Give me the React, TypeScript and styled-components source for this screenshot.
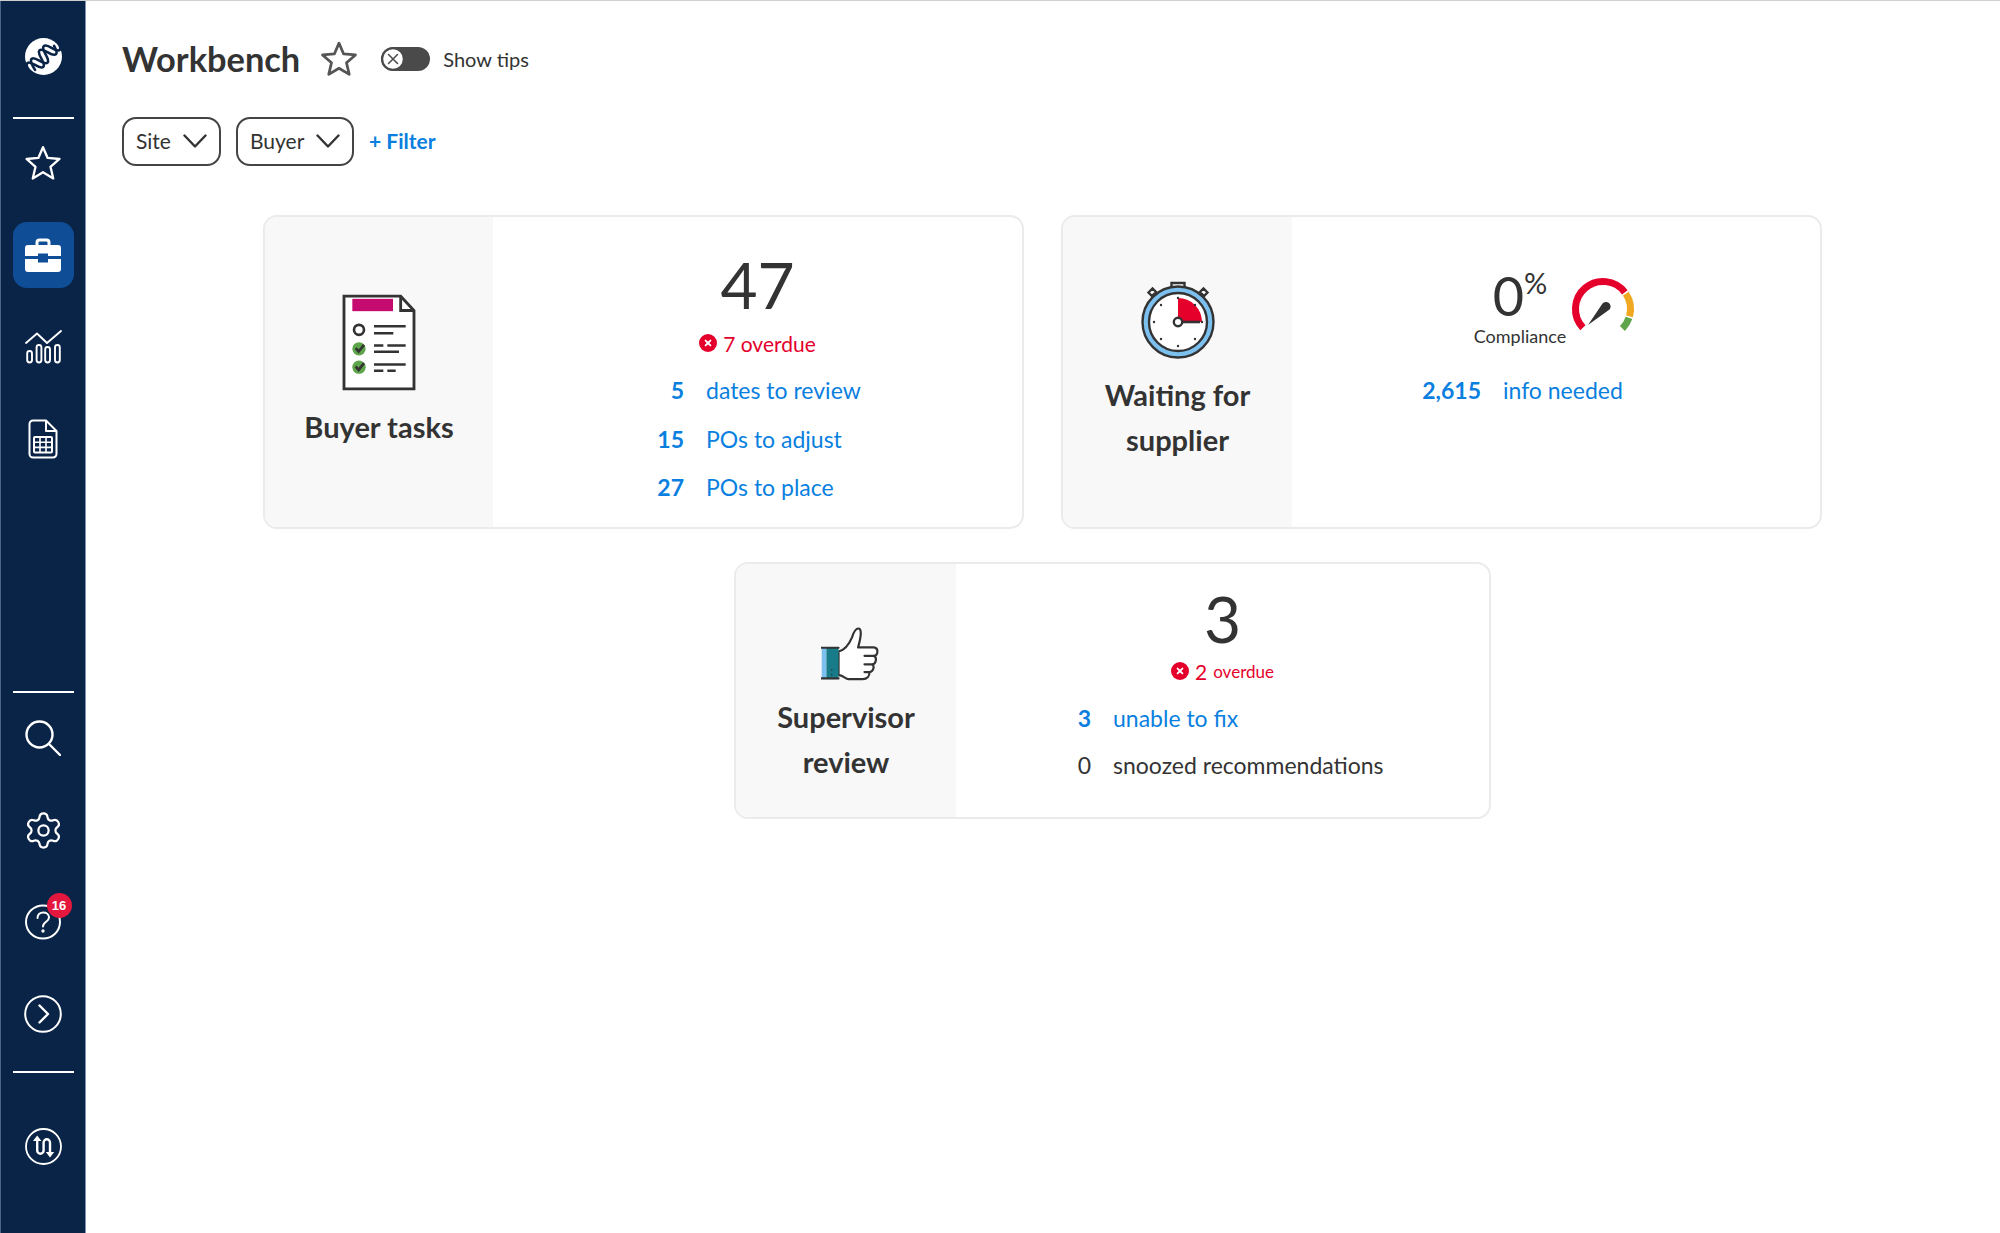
import React from 'react';
import styled, { createGlobalStyle } from 'styled-components';
import { Settings } from 'lucide-react';

const GlobalStyle = createGlobalStyle`
  html, body {
    margin: 0;
    padding: 0;
    background: #fff;
    font-family: 'Lato', 'Liberation Sans', sans-serif;
    color: #333;
  }
  * { box-sizing: border-box; }
`;

const polar = (r: number, deg: number) => {
  const a = (deg * Math.PI) / 180;
  return `${(35 + r * Math.cos(a)).toFixed(2)} ${(33 + r * Math.sin(a)).toFixed(2)}`;
};

const gaugeArc = (from: number, to: number) => `M${polar(27.5, from)} A27.5 27.5 0 ${to - from > 180 ? 1 : 0} 1 ${polar(27.5, to)}`;

const LogoIcon = () => (
  <svg width="37" height="37" viewBox="0 0 37 37">
    <circle cx="18.5" cy="18.5" r="18.5" fill="#fff" />
    <g transform="rotate(-45 18.5 18.5)" fill="none" stroke="#0a2447" strokeWidth="2.6" strokeLinecap="round">
      <path d="M-3 22 C0 9 4 9 6.5 18.5 S13 28 15.5 18.5 S22 9 24.5 18.5 S31 28 33.5 18.5" />
      <path d="M3 22 C6 9 10 9 12.5 18.5 S19 28 21.5 18.5 S28 9 30.5 18.5 S37 28 40 15" />
    </g>
  </svg>
);

const StarIcon = ({ size, color, weight }: { size: number; color: string; weight: number }) => (
  <svg width={size} height={size} viewBox="0 0 36 36" fill="none" stroke={color} strokeWidth={weight} strokeLinejoin="round">
    <path d="M18 3 L22.4 13.2 L33.6 14.2 L25.1 21.6 L27.7 32.6 L18 26.8 L8.3 32.6 L10.9 21.6 L2.4 14.2 L13.6 13.2 Z" />
  </svg>
);

const BriefcaseIcon = () => (
  <svg width="36" height="34" viewBox="0 0 36 34">
    <path d="M12 8 V4.5 A2.5 2.5 0 0 1 14.5 2 H21.5 A2.5 2.5 0 0 1 24 4.5 V8" fill="none" stroke="#fff" strokeWidth="3" />
    <path d="M3 7 H33 A3 3 0 0 1 36 10 V18 H23 V15.5 H13 V18 H0 V10 A3 3 0 0 1 3 7 Z" fill="#fff" />
    <path d="M0 21 H13 V24.5 H23 V21 H36 V31 A3 3 0 0 1 33 34 H3 A3 3 0 0 1 0 31 Z" fill="#fff" />
  </svg>
);

const TrendIcon = () => (
  <svg width="37" height="34" viewBox="0 0 37 34" fill="none" stroke="#fff" strokeWidth="1.9" strokeLinejoin="round" strokeLinecap="round">
    <path d="M1 13 L12 3.5 L22 13 L36 1" />
    <rect x="2.2" y="21" width="4.8" height="11.5" rx="2.4" />
    <rect x="11.6" y="15" width="4.8" height="17.5" rx="2.4" />
    <rect x="20.2" y="17" width="4.8" height="15.5" rx="2.4" />
    <rect x="30" y="15" width="4.8" height="17.5" rx="2.4" />
  </svg>
);

const SheetIcon = () => (
  <svg width="30" height="40" viewBox="0 0 30 40" fill="none" stroke="#fff" strokeWidth="2" strokeLinejoin="round">
    <path d="M5 1.5 H18 L28.5 12 V35 A3.5 3.5 0 0 1 25 38.5 H5 A3.5 3.5 0 0 1 1.5 35 V5 A3.5 3.5 0 0 1 5 1.5 Z" />
    <path d="M18 1.5 V12 H28.5" />
    <rect x="6" y="18" width="18" height="15.5" rx="1" />
    <path d="M6 23.2 H24 M6 28.4 H24 M12 18 V33.5 M18 18 V33.5" strokeWidth="1.6" />
  </svg>
);

const SearchIcon = () => (
  <svg width="36" height="36" viewBox="0 0 36 36" fill="none" stroke="#fff" strokeWidth="2.4" strokeLinecap="round">
    <circle cx="14.5" cy="14.5" r="13" />
    <path d="M24 24 L35 35" />
  </svg>
);

const HelpIcon = () => (
  <svg width="36" height="36" viewBox="0 0 36 36" fill="none" stroke="#fff" strokeWidth="2" strokeLinecap="round">
    <ellipse cx="18" cy="18" rx="17" ry="16.5" />
    <path d="M12.5 14 C12.5 6.5 24 7 24 13.5 C24 18 18 17.5 18 22.5" />
    <circle cx="18" cy="27" r="0.7" fill="#fff" />
  </svg>
);

const ForwardIcon = () => (
  <svg width="38" height="38" viewBox="0 0 38 38" fill="none" stroke="#fff" strokeWidth="2" strokeLinecap="round" strokeLinejoin="round">
    <circle cx="19" cy="19" r="17.8" />
    <path d="M15.5 10.5 L24 19 L15.5 27.5" strokeWidth="2.4" />
  </svg>
);

const SwapIcon = () => (
  <svg width="37" height="37" viewBox="0 0 37 37" fill="none" stroke="#fff" strokeWidth="2.4">
    <circle cx="18.5" cy="18.5" r="17.5" strokeWidth="1.8" />
    <path d="M12.2 11 V22.5 A3.2 3.2 0 0 0 18.6 22.5 V14.5 A3.2 3.2 0 0 1 25 14.5 V26" />
    <path d="M12.2 7.5 L16.4 13 H8 Z M25 29.5 L29.2 24 H20.8 Z" fill="#fff" stroke="none" />
  </svg>
);

const ChevronIcon = () => (
  <svg width="24" height="14" viewBox="0 0 24 14" fill="none" stroke="#333" strokeWidth="2.4" strokeLinecap="round" strokeLinejoin="round">
    <path d="M1.5 1.5 L12 12.5 L22.5 1.5" />
  </svg>
);

const OverdueIcon = () => (
  <svg width="18" height="18" viewBox="0 0 18 18">
    <circle cx="9" cy="9" r="9" fill="#e4002b" />
    <path d="M6.6 6.6 L11.4 11.4 M11.4 6.6 L6.6 11.4" stroke="#fff" strokeWidth="1.9" strokeLinecap="round" />
  </svg>
);

const ChecklistIcon = () => (
  <svg width="74" height="97" viewBox="34 26 222 290" fill="none" stroke="#333" strokeWidth="7.5">
    <path d="M40 32 H210 L250 75 V310 H40 Z" fill="#fff" strokeWidth="8.5" />
    <path d="M210 32 V75 H250" strokeWidth="8.5" />
    <rect x="65" y="40" width="122" height="37" fill="#c60b70" stroke="none" />
    <circle cx="85" cy="133" r="15" strokeWidth="8" />
    <path d="M130 122 H225 M130 143 H188 M130 180 H158 M170 180 H225 M130 199 H205 M130 237 H225 M130 256 H158 M170 256 H195" />
    <circle cx="85" cy="190" r="20" fill="#5ea44a" stroke="none" />
    <circle cx="85" cy="245" r="20" fill="#5ea44a" stroke="none" />
    <path d="M75 188 L84 198 L100 178 M75 243 L84 253 L100 233" strokeWidth="8" />
  </svg>
);

const StopwatchIcon = () => (
  <svg width="74" height="78" viewBox="0 0 74 78" fill="none" stroke="#333" strokeWidth="2.4">
    <path d="M30.5 2 H43.5 V7 H40 V12 H34 V7 H30.5 Z" fill="#fff" />
    <path d="M7.5 11.5 L11.5 7.5 L15 11 L11 15 Z M66.5 11.5 L62.5 7.5 L59 11 L63 15 Z" fill="#fff" />
    <path d="M12.5 15 L16 18.5 M61.5 15 L58 18.5" />
    <circle cx="37" cy="41" r="35.5" fill="#7cc0ef" />
    <circle cx="37" cy="41" r="29" fill="#fff" />
    <path d="M37 41 V17 A24 24 0 0 1 61 41 Z" fill="#e4002b" stroke="none" />
    <path d="M37 41 H59" strokeWidth="2.6" />
    <circle cx="37" cy="41" r="4.2" fill="#fff" />
    <g fill="#333" stroke="none">
      <circle cx="37" cy="17" r="1.2" />
      <circle cx="54" cy="24" r="1.2" />
      <circle cx="61" cy="41" r="1.2" />
      <circle cx="54" cy="58" r="1.2" />
      <circle cx="37" cy="65" r="1.2" />
      <circle cx="20" cy="58" r="1.2" />
      <circle cx="13" cy="41" r="1.2" />
      <circle cx="20" cy="24" r="1.2" />
    </g>
  </svg>
);

const GaugeIcon = () => (
  <GaugeSvg width="70" height="60" viewBox="0 0 70 60" fill="none" strokeWidth="7">
    <path d={gaugeArc(137, 322.5)} stroke="#e4002b" />
    <path d={gaugeArc(326, 375.5)} stroke="#f0a823" />
    <path d={gaugeArc(379, 405)} stroke="#5ea44a" />
    <path d="M20 49 L34.5 27.5 A4.6 4.6 0 0 1 41.5 33.5 Z" fill="#333" />
  </GaugeSvg>
);

const ThumbIcon = () => (
  <ThumbSvg width="58" height="54" viewBox="36 36 172 159" fill="none" stroke="#333" strokeWidth="6.5" strokeLinejoin="round" strokeLinecap="round">
    <path d="M88 108 C105 104 118 90 128 66 C133 50 140 39 148 40 C158 42 154 68 146 96 H192 C208 98 206 120 192 121 H165 H192 C203 124 200 146 187 146 H165 H187 C196 150 192 168 180 169 H165 H180 C180 182 172 190 160 190 H118 C108 190 102 178 88 178 Z" fill="#fff" />
    <rect x="38" y="95" width="14" height="95" fill="#7cc0ef" stroke="none" />
    <rect x="52" y="95" width="36" height="95" fill="#177b8a" stroke="none" />
    <path d="M38 97 H88 M38 188 H88" />
    <path d="M68 162 V163 M68 176 V177" strokeWidth="4" />
  </ThumbSvg>
);

const ToggleKnobIcon = () => (
  <svg width="24" height="24" viewBox="0 0 24 24" fill="none" stroke="#4a4a4a">
    <circle cx="12" cy="12" r="10.8" fill="#fff" strokeWidth="2" />
    <path d="M7.5 7.5 L16.5 16.5 M16.5 7.5 L7.5 16.5" strokeWidth="1.5" strokeLinecap="round" />
  </svg>
);

const App: React.FC = () => (
  <Page>
    <GlobalStyle />
    <Sidebar>
      <LogoSlot><LogoIcon /></LogoSlot>
      <SideDivider $before={42} $after={11} />
      <NavGroup>
        <NavItem><StarIcon size={38} color="#fff" weight={2.2} /></NavItem>
        <NavItem $active><BriefcaseIcon /></NavItem>
        <NavItem><TrendIcon /></NavItem>
        <NavItem><SheetIcon /></NavItem>
      </NavGroup>
      <SideSpacer />
      <SideDivider $before={0} $after={12} />
      <NavGroup>
        <NavItem><SearchIcon /></NavItem>
        <NavItem><Settings size={41} strokeWidth={1.3} color="#fff" /></NavItem>
        <NavItem>
          <HelpIcon />
          <Badge>16</Badge>
        </NavItem>
        <NavItem><ForwardIcon /></NavItem>
      </NavGroup>
      <SideDivider $before={24} $after={55} />
      <LogoSlot><SwapIcon /></LogoSlot>
    </Sidebar>

    <Main>
      <Header>
        <Title>Workbench</Title>
        <StarIcon size={38} color="#555" weight={2.6} />
        <Toggle><ToggleKnobIcon /></Toggle>
        <ToggleLabel>Show tips</ToggleLabel>
      </Header>

      <FilterBar>
        <FilterButton $width={99}>Site <ChevronIcon /></FilterButton>
        <FilterButton $width={118}>Buyer <ChevronIcon /></FilterButton>
        <AddFilter>+ Filter</AddFilter>
      </FilterBar>

      <CardArea>
        <CardRow>
          <Card $width={761} $height={314}>
            <IconPanel $width={228} $top={79}>
              <ChecklistIcon />
              <PanelTitle>Buyer tasks</PanelTitle>
            </IconPanel>
            <CardBody>
              <BigNumber $top={34}>47</BigNumber>
              <Overdue $top={8}><OverdueIcon /><span>7 overdue</span></Overdue>
              <RowList $top={9}>
                <Row $countWidth={191}><Count>5</Count><RowLabel>dates to review</RowLabel></Row>
                <Row $countWidth={191}><Count>15</Count><RowLabel>POs to adjust</RowLabel></Row>
                <Row $countWidth={191}><Count>27</Count><RowLabel>POs to place</RowLabel></Row>
              </RowList>
            </CardBody>
          </Card>

          <Card $width={761} $height={314}>
            <IconPanel $width={229} $top={66}>
              <StopwatchIcon />
              <PanelTitle>Waiting for<br />supplier</PanelTitle>
            </IconPanel>
            <CardBody>
              <Compliance>
                <ComplianceText>
                  <Percent><span>0</span><PercentSign>%</PercentSign></Percent>
                  <ComplianceLabel>Compliance</ComplianceLabel>
                </ComplianceText>
                <GaugeIcon />
              </Compliance>
              <RowList $top={18}>
                <Row $countWidth={189}><Count>2,615</Count><RowLabel>info needed</RowLabel></Row>
              </RowList>
            </CardBody>
          </Card>
        </CardRow>

        <CardRow $indent={471}>
          <Card $width={757} $height={257}>
            <IconPanel $width={220} $top={65}>
              <ThumbIcon />
              <PanelTitle>Supervisor<br />review</PanelTitle>
            </IconPanel>
            <CardBody>
              <BigNumber $top={21}>3</BigNumber>
              <Overdue $top={2}>
                <OverdueIcon />
                <span>2</span>
                <OverdueSmall>overdue</OverdueSmall>
              </Overdue>
              <RowList $top={9}>
                <Row $countWidth={135} $pitch={47}><Count>3</Count><RowLabel>unable to fix</RowLabel></Row>
                <Row $countWidth={135} $pitch={47} $muted><Count $light>0</Count><RowLabel>snoozed recommendations</RowLabel></Row>
              </RowList>
            </CardBody>
          </Card>
        </CardRow>
      </CardArea>
    </Main>
  </Page>
);

const Page = styled.div`
  display: flex;
  min-height: 100vh;
  border-top: 1px solid #cfcfcf;
`;

const Sidebar = styled.nav`
  width: 86px;
  flex-shrink: 0;
  display: flex;
  flex-direction: column;
  align-items: center;
  padding: 37px 0 68px;
  background: #0a2447;
  border-left: 1px solid #4a6288;
  border-right: 1px solid #7d90ad;
`;

const LogoSlot = styled.div`
  width: 37px;
  height: 37px;
  display: flex;
  align-items: center;
  justify-content: center;
`;

const SideDivider = styled.div<{ $before: number; $after: number }>`
  width: 61px;
  height: 2px;
  flex-shrink: 0;
  background: #fff;
  margin: ${({ $before }) => $before}px 0 ${({ $after }) => $after}px;
`;

const SideSpacer = styled.div`
  flex: 1;
`;

const NavGroup = styled.div`
  display: flex;
  flex-direction: column;
  gap: 26px;
`;

const NavItem = styled.div<{ $active?: boolean }>`
  position: relative;
  width: 61px;
  height: 66px;
  display: flex;
  align-items: center;
  justify-content: center;
  border-radius: 14px;
  background: ${({ $active }) => ($active ? '#0f4d96' : 'transparent')};
`;

const Badge = styled.span`
  position: absolute;
  top: 4px;
  right: 2px;
  width: 25px;
  height: 25px;
  border-radius: 50%;
  display: flex;
  align-items: center;
  justify-content: center;
  background: #e4173e;
  color: #fff;
  font-family: 'Liberation Sans', sans-serif;
  font-size: 13px;
  font-weight: 700;
`;

const Main = styled.main`
  flex: 1;
  min-width: 0;
  padding: 35px 0 0 36px;
`;

const Header = styled.header`
  display: flex;
  align-items: center;
  height: 46px;
`;

const Title = styled.h1`
  margin: 0 20px 0 0;
  font-size: 34.4px;
  font-weight: 700;
  line-height: 46px;
  color: #333;
`;

const Toggle = styled.div`
  width: 49px;
  height: 24px;
  margin: 0 13px 0 23px;
  border-radius: 12px;
  background: #4a4a4a;
`;

const ToggleLabel = styled.span`
  font-size: 20px;
  color: #333;
`;

const FilterBar = styled.div`
  display: flex;
  align-items: center;
  gap: 15px;
  margin-top: 35px;
`;

const FilterButton = styled.div<{ $width: number }>`
  width: ${({ $width }) => $width}px;
  height: 49px;
  display: flex;
  align-items: center;
  justify-content: space-between;
  padding: 0 12px 2px 12px;
  border: 2px solid #444;
  border-radius: 14px;
  font-size: 21px;
  color: #333;
`;

const AddFilter = styled.span`
  font-size: 21px;
  font-weight: 700;
  color: #0a7fe0;
  margin-bottom: 2px;
`;

const CardArea = styled.div`
  display: flex;
  flex-direction: column;
  gap: 33px;
  margin: 49px 0 0 141px;
`;

const CardRow = styled.div<{ $indent?: number }>`
  display: flex;
  gap: 37px;
  padding-left: ${({ $indent }) => $indent ?? 0}px;
`;

const Card = styled.section<{ $width: number; $height: number }>`
  width: ${({ $width }) => $width}px;
  height: ${({ $height }) => $height}px;
  display: flex;
  overflow: hidden;
  border: 2px solid #ebebeb;
  border-radius: 14px;
  background: #fff;
`;

const IconPanel = styled.div<{ $width: number; $top: number }>`
  width: ${({ $width }) => $width}px;
  flex-shrink: 0;
  display: flex;
  flex-direction: column;
  align-items: center;
  gap: 13px;
  padding-top: ${({ $top }) => $top - 2}px;
  background: #f8f8f8;
`;

const ThumbSvg = styled.svg`
  margin-left: 7px;
`;

const PanelTitle = styled.div`
  font-size: 29px;
  font-weight: 700;
  line-height: 45px;
  text-align: center;
  color: #333;
`;

const CardBody = styled.div`
  flex: 1;
  min-width: 0;
  display: flex;
  flex-direction: column;
`;

const BigNumber = styled.div<{ $top: number }>`
  margin-top: ${({ $top }) => $top - 2}px;
  font-size: 64px;
  line-height: 72px;
  text-align: center;
  color: #333;
`;

const Overdue = styled.div<{ $top: number }>`
  display: flex;
  align-items: center;
  justify-content: center;
  gap: 6px;
  height: 28px;
  margin-top: ${({ $top }) => $top}px;
  font-size: 21px;
  color: #e4002b;
`;

const OverdueSmall = styled.span`
  font-size: 17px;
`;

const RowList = styled.div<{ $top: number }>`
  display: flex;
  flex-direction: column;
  margin-top: ${({ $top }) => $top}px;
`;

const Row = styled.div<{ $countWidth: number; $pitch?: number; $muted?: boolean }>`
  display: grid;
  grid-template-columns: ${({ $countWidth }) => $countWidth}px 1fr;
  column-gap: 22px;
  height: ${({ $pitch }) => $pitch ?? 48.5}px;
  align-items: center;
  font-size: 23px;
  color: ${({ $muted }) => ($muted ? '#333' : '#0a7fe0')};
`;

const Count = styled.span<{ $light?: boolean }>`
  text-align: right;
  font-weight: ${({ $light }) => ($light ? 400 : 700)};
`;

const RowLabel = styled.span`
  font-weight: 400;
`;

const Compliance = styled.div`
  display: flex;
  justify-content: center;
  gap: 2px;
  margin-top: 51px;
`;

const ComplianceText = styled.div`
  display: flex;
  flex-direction: column;
  align-items: center;
`;

const Percent = styled.div`
  display: flex;
  align-items: flex-start;
  font-size: 54px;
  line-height: 56px;
  color: #333;
`;

const PercentSign = styled.span`
  font-size: 29px;
  line-height: 30px;
`;

const ComplianceLabel = styled.div`
  font-size: 18px;
  line-height: 24px;
  color: #333;
`;

const GaugeSvg = styled.svg`
  margin-top: 8px;
`;

export default App;
